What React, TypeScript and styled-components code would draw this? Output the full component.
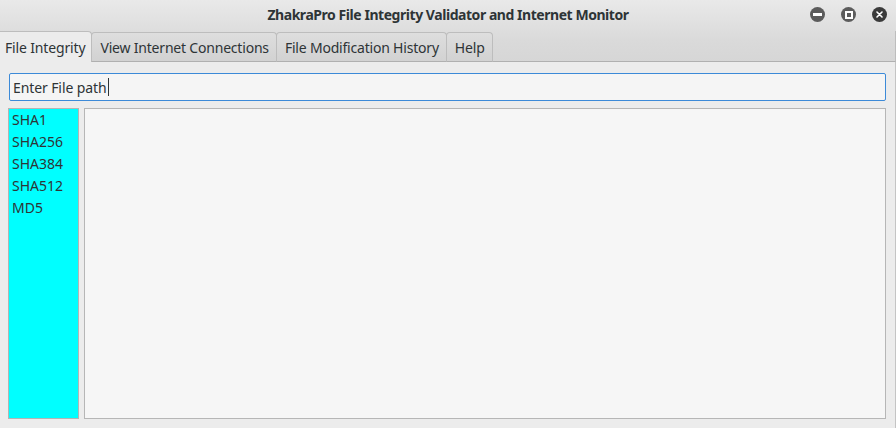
import React from "react";
import styled, { createGlobalStyle } from "styled-components";

const Global = createGlobalStyle`
  html, body { margin: 0; padding: 0; }
  body {
    width: 896px; height: 428px; overflow: hidden;
    font-family: "Noto Sans", "Open Sans", sans-serif;
    color: #2e3436;
    background: #ececec;
  }
`;

const Window = styled.div`
  width: 896px;
  height: 428px;
  display: flex;
  flex-direction: column;
  background: #ececec;
`;

const Header = styled.div`
  background: linear-gradient(to bottom, #e9e9e9 0px, #dadada 40px, #d6d6d6 62px);
  display: flex;
  flex-direction: column;
`;

const TitleBar = styled.div`
  height: 31px;
  display: grid;
  grid-template-columns: 1fr auto 1fr;
  align-items: center;
`;

const Title = styled.div`
  grid-column: 2;
  font-weight: bold;
  font-size: 14px;
  letter-spacing: -0.45px;
  color: #2e3436;
  padding-bottom: 2px;
`;

const Controls = styled.div`
  grid-column: 3;
  justify-self: end;
  display: flex;
  gap: 16px;
  padding-right: 9px;
  padding-bottom: 2px;
`;

const CtlBtn = styled.div<{ $dark?: boolean }>`
  width: 15px;
  height: 15px;
  border-radius: 50%;
  background: ${(p) => (p.$dark ? "#3b3b3b" : "#5c5c5c")};
  display: flex;
  align-items: center;
  justify-content: center;
`;

const TabStrip = styled.div`
  display: flex;
  align-items: flex-end;
  height: 31px;
`;

const Tab = styled.div<{ $active?: boolean }>`
  height: ${(p) => (p.$active ? "31px" : "30px")};
  box-sizing: border-box;
  padding: ${(p) => (p.$active ? "0 6px 0 5px" : "0 7px 0 8px")};
  display: flex;
  align-items: center;
  font-size: 14px;
  letter-spacing: ${(p) => (p.$active ? "-0.15px" : "-0.2px")};
  color: #2e3436;
  border: 1px solid #bdbdbd;
  border-left: ${(p) => (p.$active ? "none" : "1px solid #bdbdbd")};
  border-bottom: ${(p) => (p.$active ? "none" : "1px solid #b0b0b0")};
  border-radius: ${(p) => (p.$active ? "0 4px 0 0" : "4px 4px 0 0")};
  background: ${(p) =>
    p.$active ? "#ececec" : "linear-gradient(to bottom, #dedede, #d2d2d2)"};
  margin-left: ${(p) => (p.$active ? "0" : "-1px")};
  white-space: nowrap;
  &:first-child { margin-left: 0; }
`;

const TabFill = styled.div`
  flex: 1;
  height: 31px;
  box-sizing: border-box;
  border-bottom: 1px solid #b0b0b0;
  border-right: 1px solid #bdbdbd;
`;

const Body = styled.div`
  flex: 1;
  display: flex;
  flex-direction: column;
  gap: 7px;
  padding: 11px 9px 9px 8px;
  border-right: 1px solid #c4c4c4;
  box-sizing: border-box;
`;

const PathInput = styled.div`
  height: 28px;
  margin-left: 1px;
  box-sizing: border-box;
  border: 1px solid #3c8ad8;
  border-radius: 2px;
  background: #f5f5f5;
  display: flex;
  align-items: center;
  padding-left: 3px;
  font-size: 14px;
  letter-spacing: -0.1px;
  color: #2e3436;
`;

const Caret = styled.span`
  display: inline-block;
  width: 1px;
  height: 18px;
  background: #2e3436;
  margin-left: 1px;
`;

const Row = styled.div`
  flex: 1;
  display: flex;
  gap: 5px;
`;

const HashList = styled.div`
  width: 71px;
  box-sizing: border-box;
  background: #00ffff;
  border: 1px solid #b4b4b4;
  padding: 0 0 0 3px;
  display: flex;
  flex-direction: column;
`;

const HashItem = styled.div`
  height: 22px;
  line-height: 22px;
  font-size: 14px;
  color: #2e3436;
`;

const Output = styled.div`
  flex: 1;
  box-sizing: border-box;
  background: #f6f6f6;
  border: 1px solid #b6b6b6;
`;

export default function App() {
  const hashes = ["SHA1", "SHA256", "SHA384", "SHA512", "MD5"];
  return (
    <>
      <Global />
      <Window>
        <Header>
          <TitleBar>
            <Title>ZhakraPro File Integrity Validator and Internet Monitor</Title>
            <Controls>
              <CtlBtn>
                <svg width="9" height="3" viewBox="0 0 9 3">
                  <rect x="0" y="0" width="9" height="3" fill="#ffffff" />
                </svg>
              </CtlBtn>
              <CtlBtn>
                <svg width="8" height="8" viewBox="0 0 8 8">
                  <rect x="1" y="1" width="6" height="6" fill="none" stroke="#ffffff" strokeWidth="2" />
                </svg>
              </CtlBtn>
              <CtlBtn $dark>
                <svg width="7" height="7" viewBox="0 0 7 7">
                  <path d="M1 1 L6 6 M6 1 L1 6" stroke="#ffffff" strokeWidth="1.6" strokeLinecap="round" />
                </svg>
              </CtlBtn>
            </Controls>
          </TitleBar>
          <TabStrip>
            <Tab $active>File Integrity</Tab>
            <Tab>View Internet Connections</Tab>
            <Tab>File Modification History</Tab>
            <Tab>Help</Tab>
            <TabFill />
          </TabStrip>
        </Header>
        <Body>
          <PathInput>
            Enter File path<Caret />
          </PathInput>
          <Row>
            <HashList>
              {hashes.map((h) => (
                <HashItem key={h}>{h}</HashItem>
              ))}
            </HashList>
            <Output />
          </Row>
        </Body>
      </Window>
    </>
  );
}
